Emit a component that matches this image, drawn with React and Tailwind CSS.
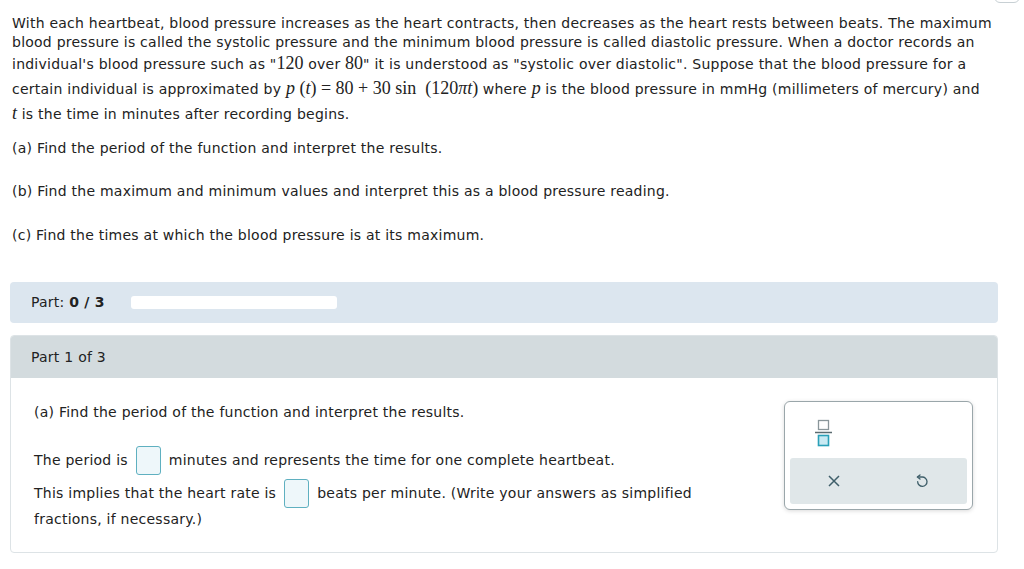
import React from "react";

const serif = "font-['Liberation_Serif','Times_New_Roman',serif] tracking-normal";

function M({ children, italic }) {
  return (
    <span className={`${serif} text-[18px] ${italic ? "italic" : ""}`}>{children}</span>
  );
}

function Box() {
  return (
    <span className="inline-block shrink-0 w-[25px] h-[29px] rounded-[3px] border border-[#5fb0c0] bg-[#eef7fa] mx-[8px]" />
  );
}

export default function App() {
  return (
    <div className="w-[1024px] h-[569px] bg-white text-[#222] font-['DejaVu_Sans',Verdana,sans-serif] text-[14px] tracking-[0.24px] relative overflow-hidden">
      <div className="absolute right-[4px] -top-[10px] w-[26px] h-[13px] rounded-[6px] border border-[#c8d0d4]" />
      <div className="pl-[12px] pt-[14px]">
        <div className="leading-[19px]">With each heartbeat, blood pressure increases as the heart contracts, then decreases as the heart rests between beats. The maximum</div>
        <div className="leading-[18px]">blood pressure is called the systolic pressure and the minimum blood pressure is called diastolic pressure. When a doctor records an</div>
        <div className="leading-[24px]">individual's blood pressure such as "<M>120</M> over <M>80</M>" it is understood as "systolic over diastolic". Suppose that the blood pressure for a</div>
        <div className="leading-[24px]">
          certain individual is approximated by <M italic>p</M>
          <span className={`${serif} text-[18px] whitespace-pre`}> (<i>t</i>) = 80 + 30 sin  (120<i>πt</i>) </span>where <M italic>p</M> is the blood pressure in mmHg (millimeters of mercury) and
        </div>
        <div className="leading-[24px]"><M italic>t</M> is the time in minutes after recording begins.</div>
        <div className="mt-[12px] leading-[20px]">(a) Find the period of the function and interpret the results.</div>
        <div className="mt-[23px] leading-[20px]">(b) Find the maximum and minimum values and interpret this as a blood pressure reading.</div>
        <div className="mt-[24px] leading-[20px]">(c) Find the times at which the blood pressure is at its maximum.</div>
      </div>

      <div className="mx-[10px] w-[988px] mt-[37px] h-[41px] rounded-[4px] bg-[#dce6ef] flex items-center pl-[21px]">
        <span>Part: <b>0 / 3</b></span>
        <div className="ml-[26px] w-[206px] h-[13px] rounded-[3px] bg-white" />
      </div>

      <div className="mx-[10px] w-[988px] mt-[12px] h-[218px] rounded-[4px] border border-[#dde3e6] overflow-hidden">
        <div className="h-[42px] bg-[#d3dbde] flex items-center pl-[20px]">Part 1 of 3</div>
        <div className="flex">
          <div className="flex-1 pl-[23px] pt-[24px]">
            <div className="leading-[20px]">(a) Find the period of the function and interpret the results.</div>
            <div className="mt-[22px] h-[33px] flex items-center whitespace-nowrap">The period is<Box />minutes and represents the time for one complete heartbeat.</div>
            <div className="h-[33px] flex items-center whitespace-nowrap">This implies that the heart rate is<Box />beats per minute. (Write your answers as simplified</div>
            <div className="leading-[19px]">fractions, if necessary.)</div>
          </div>
          <div className="w-[189px] mr-[24px] mt-[23px] h-[109px] rounded-[6px] border border-[#9aa6aa] shadow-[0_1px_4px_rgba(0,0,0,0.15)] bg-white p-[5px] flex flex-col">
            <div className="h-[51px] pl-[23px] pt-[10px]">
              <svg width="20" height="30" viewBox="0 0 20 30">
                <rect x="5.5" y="3.5" width="10" height="9" fill="none" stroke="#8a969a" strokeWidth="1.3" />
                <line x1="2" y1="15.5" x2="19" y2="15.5" stroke="#5b6b70" strokeWidth="1.3" />
                <rect x="5.5" y="18.5" width="10" height="10" fill="#c9eaf3" stroke="#2aa0b8" strokeWidth="1.6" />
              </svg>
            </div>
            <div className="flex-1 rounded-[3px] bg-[#e0e7e9] flex items-center justify-around">
              <svg width="14" height="14" viewBox="0 0 14 14">
                <path d="M2 2 L12 12 M12 2 L2 12" stroke="#3f5f6a" strokeWidth="1.5" />
              </svg>
              <svg width="16" height="16" viewBox="0 0 24 24" fill="none" stroke="#3f5f6a" strokeWidth="2" strokeLinecap="round" strokeLinejoin="round">
                <path d="M9 3 L5 6 L9 9" />
                <path d="M6 6 H12 A7 7 0 1 1 5.5 13" />
              </svg>
            </div>
          </div>
        </div>
      </div>
    </div>
  );
}
